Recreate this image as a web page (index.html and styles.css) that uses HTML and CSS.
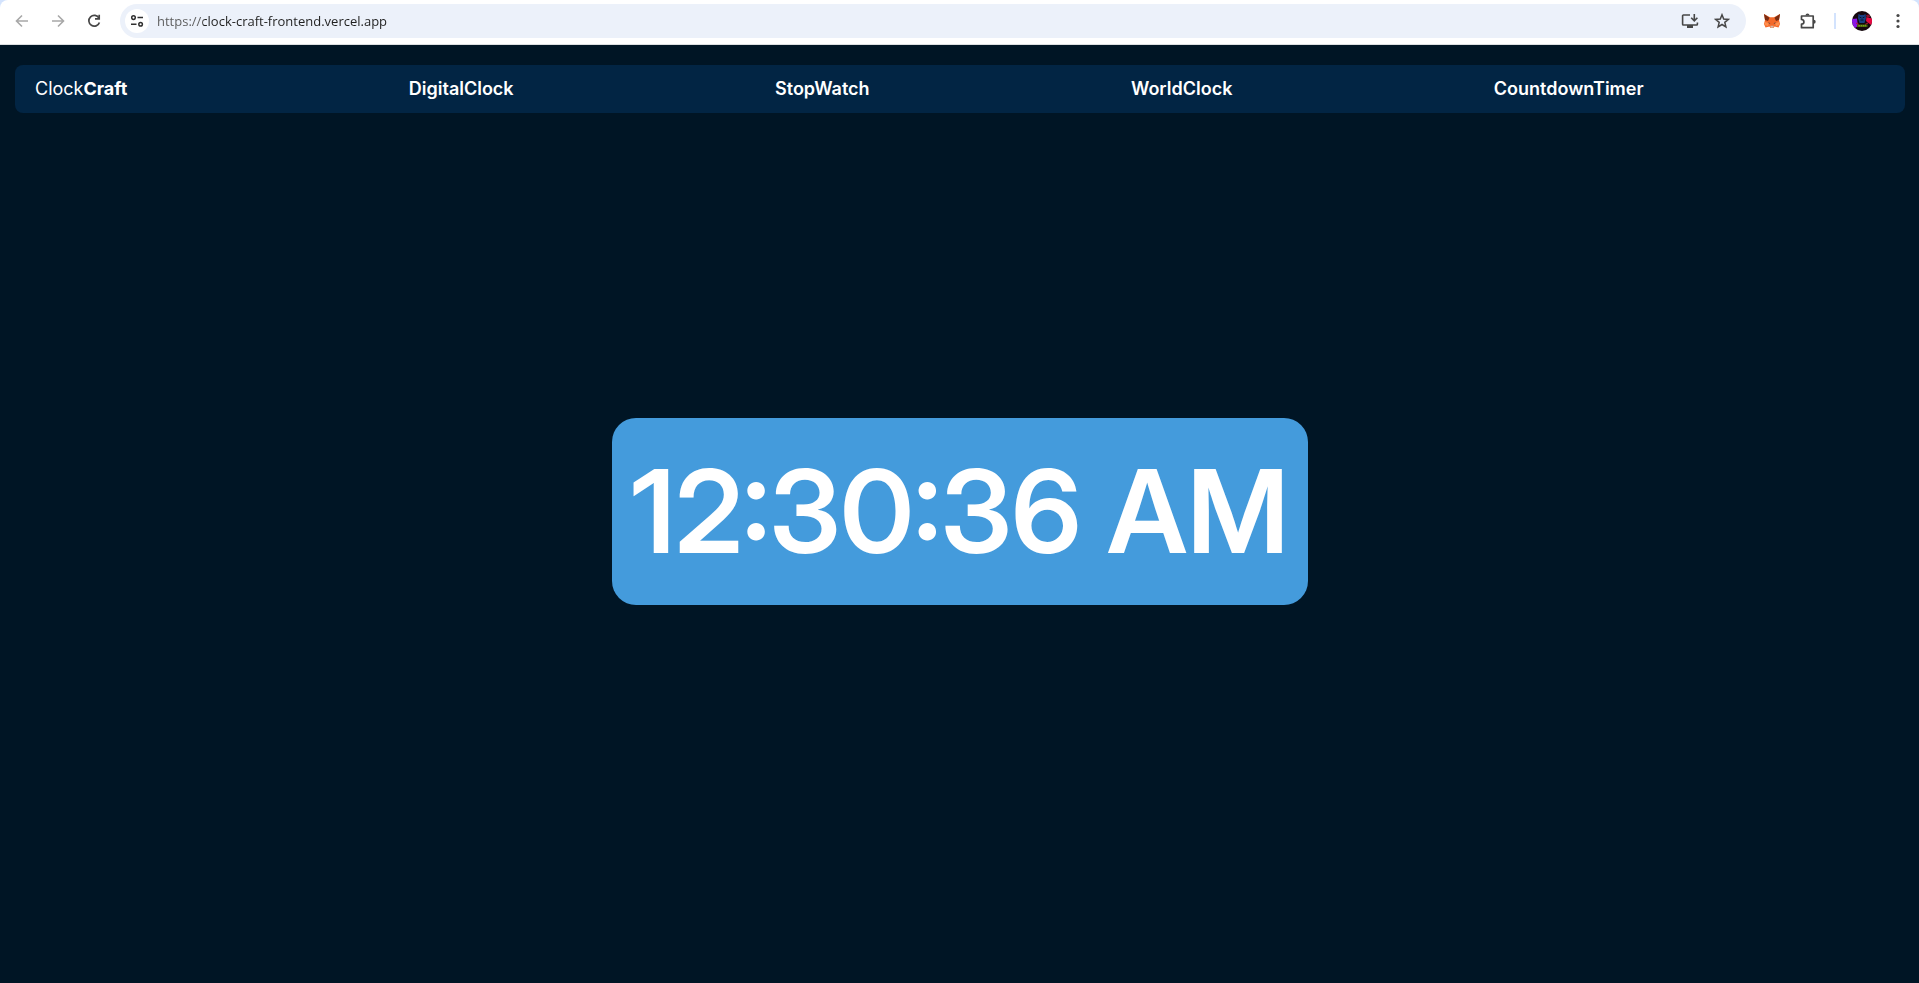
FILE: index.html
```html
<!DOCTYPE html>
<html lang="en">
<head>
<meta charset="utf-8">
<title>ClockCraft</title>
<link rel="stylesheet" href="styles.css">
</head>
<body>
<div class="browser">
  <header class="toolbar-frame">
    <div class="toolbar">
      <div class="history">
        <button class="icon-btn" aria-label="Back" disabled>
          <svg width="16" height="16" viewBox="0 0 16 16"><path d="M14 8H3M8 2.5 2.5 8 8 13.5" fill="none" stroke="#a8a8a8" stroke-width="1.6"/></svg>
        </button>
        <button class="icon-btn" aria-label="Forward" disabled>
          <svg width="16" height="16" viewBox="0 0 16 16"><path d="M2 8h11M8 2.5 13.5 8 8 13.5" fill="none" stroke="#a8a8a8" stroke-width="1.6"/></svg>
        </button>
        <button class="icon-btn" aria-label="Reload">
          <svg width="16" height="16" viewBox="0 0 16 16"><path d="M13 5.200A5.400 5.400 0 1 0 13.400 9.400" fill="none" stroke="#474747" stroke-width="1.700"/><path d="M13.200 1.800v4.100H9" fill="none" stroke="#474747" stroke-width="1.700"/></svg>
        </button>
      </div>
      <div class="address">
        <button class="site-info" aria-label="View site information">
          <svg width="16" height="16" viewBox="0 0 16 16" fill="none" stroke="#303030" stroke-width="1.5"><circle cx="4.5" cy="4.6" r="1.8"/><path d="M8.5 4.6H14M2 11.2h5.5"/><circle cx="11.6" cy="11.2" r="1.8"/></svg>
        </button>
        <input class="url" type="text" aria-label="Address" value="https://clock-craft-frontend.vercel.app" spellcheck="false">
        <button class="icon-btn" aria-label="Install app">
          <svg width="18" height="16" viewBox="0 0 18 16"><path d="M9 2H2.4a.8.8 0 0 0-.8.8v8.400c0 .5.400.8.8.8h13.200c.4 0 .8-.3.8-.8V9.500" fill="none" stroke="#474747" stroke-width="1.6"/><path d="M6 12h6v3H6z" fill="#474747"/><path d="M13.300 1v6.500M10.200 4.800l3.100 3.100 3.100-3.100" fill="none" stroke="#474747" stroke-width="1.600"/></svg>
        </button>
        <button class="icon-btn" aria-label="Bookmark this tab">
          <svg width="16" height="16" viewBox="0 0 16 16"><path d="M8 1.800 9.700 6l4.700.4-3.600 3 1.100 4.500L8 11.500l-3.900 2.400 1.100-4.500-3.600-3L6.300 6z" fill="none" stroke="#474747" stroke-width="1.500"/></svg>
        </button>
      </div>
      <div class="extensions">
        <button class="icon-btn" aria-label="MetaMask">
          <svg width="18" height="16" viewBox="0 0 18 16"><path d="M1 1l6 3.300h4L17 1l-1 6 1 4-1.500 3.500L11.500 13.500 10.500 15h-3l-1-1.500-4 1L1 11l1-4z" fill="#f4692a"/><path d="M1 1l5.500 3.700L5 8 2 7zM17 1l-5.500 3.700L13 8l3-1z" fill="#7b2c12"/><path d="M2 9l4 1-1 3-3.500-1zM16 9l-4 1 1 3 3.500-1z" fill="#ff8f4d"/><path d="M5.500 9.200l2 1.200H5.800zM12.500 9.200l-2 1.200h1.700z" fill="#263a4c"/><path d="M7.300 12.800h3.400l-.4 1.900H7.700z" fill="#d3b9aa"/></svg>
        </button>
        <button class="icon-btn" aria-label="Extensions">
          <svg width="18" height="18" viewBox="0 0 18 18"><path d="M2.500 4h11.700v11.700H2.500v-3.600c1.500 0 2.400-.9 2.400-2.200S4 7.500 2.500 7.500z" fill="none" stroke="#474747" stroke-width="1.700" stroke-linejoin="round"/><path d="M6.500 3.500a2 2 0 0 1 4 0zM14.700 7.700a2 2 0 0 1 0 4z" fill="#474747"/></svg>
        </button>
        <span class="divider"></span>
        <button class="icon-btn" aria-label="Profile">
          <svg width="20" height="20" viewBox="0 0 20 20"><circle cx="10" cy="10" r="10" fill="#16080e"/><path d="M.3 8 5 7.500 6 15l-3 2A10 10 0 0 1 .3 8z" fill="#8b16e8"/><path d="M19.800 7.500 14.500 6 14 10l5 4a10 10 0 0 0 .8-6.500z" fill="#e70842"/><path d="M14 4l3-.5 1.500 2L15 7z" fill="#86102c"/><path d="M6.500 3l2 1h3l2-1 .5 4-1.500 5h-5L6 7z" fill="#173f83"/><path d="M7.500 6l2 1M12.500 6l-2 1M8.500 9h3" stroke="#071426"/><path d="M4 12l3 1.500M16 12l-3 1.500" stroke="#b61836"/><path d="M5 13.500h10.500V16H5z" fill="#45600e"/><path d="M6.500 14.800h7.500" stroke="#91b91d" stroke-dasharray="1.500 .7"/></svg>
        </button>
        <button class="icon-btn" aria-label="Menu">
          <svg width="16" height="16" viewBox="0 0 16 16" fill="#474747"><circle cx="8" cy="2.500" r="1.600"/><circle cx="8" cy="8" r="1.600"/><circle cx="8" cy="13.500" r="1.600"/></svg>
        </button>
      </div>
    </div>
  </header>
  <div class="page">
    <nav class="navbar">
      <a class="brand" href="#">Clock<b>Craft</b></a>
      <div class="links">
        <a href="#">DigitalClock</a>
        <a href="#">StopWatch</a>
        <a href="#">WorldClock</a>
        <a href="#">CountdownTimer</a>
      </div>
    </nav>
    <main class="stage">
      <time class="clock">12:30:36 AM</time>
    </main>
  </div>
</div>
</body>
</html>
```
FILE: styles.css
```css
* { box-sizing: border-box; }
body { margin: 0; font-family: Inter, sans-serif; }
.browser { display: flex; flex-direction: column; min-height: 100vh; }
.toolbar-frame { background: #d3e3fd; }
.toolbar {
  display: flex; align-items: center; height: 45px; padding: 0 7px 3px 8px;
  background: #fff; border-bottom: 1px solid #dcdfe1; border-radius: 8px 8px 0 0;
}
button { display: grid; place-items: center; padding: 0; border: 0; background: none; }
svg { display: block; }
.icon-btn { width: 28px; height: 28px; border-radius: 50%; }
.history { display: flex; gap: 8px; padding-right: 12px; }
.address {
  display: flex; flex: 1; align-items: center; height: 34px; padding: 0 10px 0 5px; gap: 4px;
  background: #ecf1fa; border-radius: 17px;
}
.site-info { width: 24px; height: 24px; border-radius: 50%; background: #fff; }
.url {
  flex: 1; min-width: 0; height: 24px; margin-left: 4px; padding: 0; border: 0; outline: 0;
  font: 13px/24px "Open Sans", sans-serif; color: #1f1f1f;
  background: linear-gradient(to right, #5a5a5a 46px, #1f1f1f 46px);
  background-clip: text; -webkit-background-clip: text; -webkit-text-fill-color: transparent;
}
.extensions { display: flex; align-items: center; gap: 8px; padding-left: 12px; }
.divider { width: 2px; height: 16px; margin: 0 4px; background: #d3e3fd; }
.page { display: flex; flex: 1; flex-direction: column; padding: 20px 14px 0 15px; background: #001525; }
.navbar {
  display: flex; align-items: center; height: 48px; padding-left: 20px;
  background: #022544; border-radius: 8px; font-size: 18px; line-height: 24px;
}
.navbar a { color: #fff; text-decoration: none; }
.brand { margin-right: 20px; }
.brand b { font-weight: 700; }
.links { display: flex; flex: 1; justify-content: space-evenly; font-weight: 600; }
.stage { display: flex; flex: 1; align-items: center; justify-content: center; padding-bottom: 74px; }
.clock {
  padding: 24px 19px; border-radius: 24px; background: #449bdc; color: #fff;
  font-family: "Inter Display", Inter, sans-serif; font-optical-sizing: auto; font-variation-settings: "opsz" 32;
  font-size: 6vw; line-height: 139px; font-weight: 600; white-space: nowrap;
}
```
